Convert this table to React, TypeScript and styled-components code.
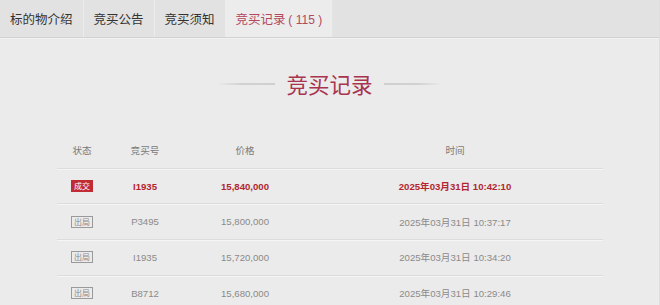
import React from "react";
import styled, { createGlobalStyle, css } from "styled-components";

const GlobalStyle = createGlobalStyle`
  html, body { margin: 0; padding: 0; background: #ebebeb; }
  body {
    font-family: "Liberation Sans", "Noto Sans CJK SC", sans-serif;
    width: 660px;
    height: 305px;
    overflow: hidden;
  }
`;

const Page = styled.div`
  width: 659px;
  height: 305px;
  border-right: 1px solid #dedede;
  background: #ebebeb;
`;

const TabBar = styled.div`
  display: flex;
  height: 37px;
  background: #e2e2e2;
  border-bottom: 1px solid #d2d2d2;
  box-shadow: 0 1px 0 #f2f2f2;
`;

const Tab = styled.div<{ $active?: boolean }>`
  padding: 0 10px;
  line-height: 37px;
  font-family: "Noto Sans CJK SC", "Liberation Sans", sans-serif;
  font-size: 12.5px;
  color: #333;
  border-right: 1px solid #ececec;
  white-space: nowrap;
  ${(p) =>
    p.$active &&
    css`
      background: #ececec;
      color: #b4485f;
      border-right-color: #e4e4e4;
    `}
`;

const Count = styled.span`
  font-family: "Liberation Sans", sans-serif;
  font-size: 12px;
`;

const TitleRow = styled.div`
  display: flex;
  align-items: center;
  justify-content: center;
  gap: 11px;
  margin-top: 34px;
  height: 24px;
`;

const TitleLine = styled.div<{ $dir: "left" | "right" }>`
  width: 58px;
  height: 2px;
  background: linear-gradient(
    ${(p) => (p.$dir === "left" ? "to right" : "to left")},
    rgba(205, 205, 205, 0) 0%,
    #d2d2d2 40%,
    #cfcfcf 100%
  );
`;

const Title = styled.div`
  font-family: "Noto Sans CJK SC", sans-serif;
  font-size: 21.5px;
  line-height: 24px;
  color: #a8344f;
`;

const Table = styled.div`
  width: 546px;
  margin: 37px 0 0 57px;
`;

const Row = styled.div`
  display: grid;
  grid-template-columns: 50px 76px 124px 296px;
  align-items: center;
  height: 34.7px;
  border-bottom: 1px solid #dcdcdc;
  box-shadow: 0 1px 0 #f5f5f5;
`;

const Cell = styled.div<{ $tone?: "head" | "win" | "normal" }>`
  text-align: center;
  font-size: 9.6px;
  white-space: nowrap;
  font-family: "Liberation Sans", "Noto Sans CJK SC", sans-serif;
  color: ${(p) => (p.$tone === "win" ? "#b3262f" : p.$tone === "head" ? "#7a7a7a" : "#8a8a8a")};
  font-weight: ${(p) => (p.$tone === "win" ? 700 : 400)};
`;

const Badge = styled.span<{ $win?: boolean }>`
  display: inline-block;
  font-family: "Noto Sans CJK SC", sans-serif;
  font-size: 8px;
  line-height: 10px;
  padding: 0 2px;
  ${(p) =>
    p.$win
      ? css`
          background: #c02b34;
          color: #fff;
          border: 1px solid #c02b34;
        `
      : css`
          background: transparent;
          color: #8a8a8a;
          border: 1px solid #9a9a9a;
        `}
`;

type Bid = { win: boolean; no: string; price: string; time: string };

const bids: Bid[] = [
  { win: true, no: "I1935", price: "15,840,000", time: "2025年03月31日 10:42:10" },
  { win: false, no: "P3495", price: "15,800,000", time: "2025年03月31日 10:37:17" },
  { win: false, no: "I1935", price: "15,720,000", time: "2025年03月31日 10:34:20" },
  { win: false, no: "B8712", price: "15,680,000", time: "2025年03月31日 10:29:46" },
];

export default function App() {
  return (
    <>
      <GlobalStyle />
      <Page>
        <TabBar>
          <Tab>标的物介绍</Tab>
          <Tab>竞买公告</Tab>
          <Tab>竞买须知</Tab>
          <Tab $active>
            竞买记录 <Count>( 115 )</Count>
          </Tab>
        </TabBar>
        <TitleRow>
          <TitleLine $dir="left" />
          <Title>竞买记录</Title>
          <TitleLine $dir="right" />
        </TitleRow>
        <Table>
          <Row>
            <Cell $tone="head">状态</Cell>
            <Cell $tone="head">竞买号</Cell>
            <Cell $tone="head">价格</Cell>
            <Cell $tone="head">时间</Cell>
          </Row>
          {bids.map((b, i) => {
            const tone = b.win ? "win" : "normal";
            return (
              <Row key={i}>
                <Cell>
                  <Badge $win={b.win}>{b.win ? "成交" : "出局"}</Badge>
                </Cell>
                <Cell $tone={tone}>{b.no}</Cell>
                <Cell $tone={tone}>{b.price}</Cell>
                <Cell $tone={tone}>{b.time}</Cell>
              </Row>
            );
          })}
        </Table>
      </Page>
    </>
  );
}
